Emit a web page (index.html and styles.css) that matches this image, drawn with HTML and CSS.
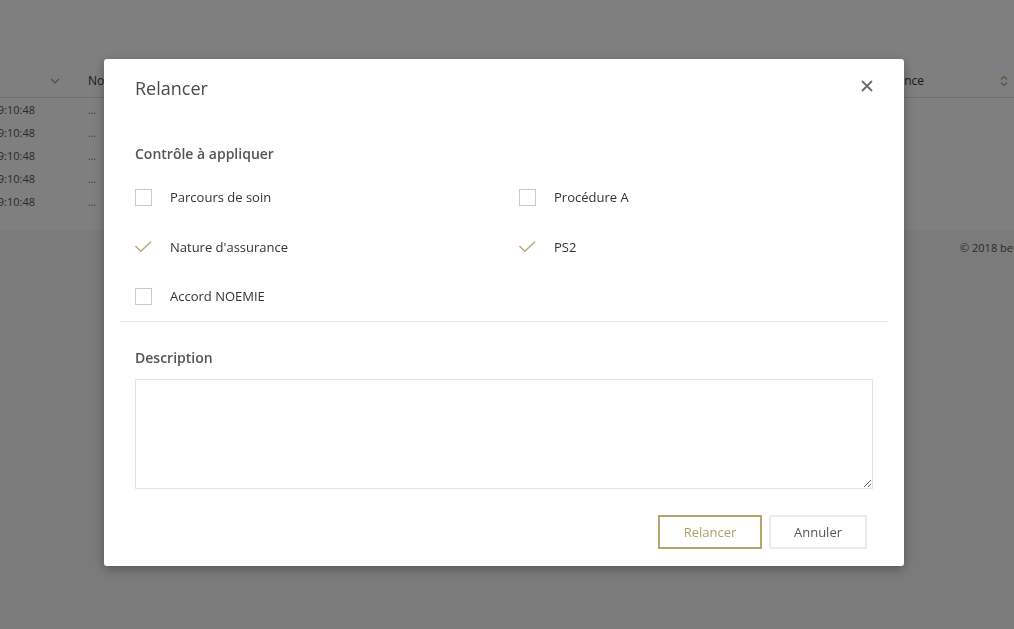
FILE: index.html
```html
<!DOCTYPE html>
<html lang="fr">
<head>
<meta charset="utf-8">
<title>Relancer</title>
<link rel="stylesheet" href="styles.css">
</head>
<body>
<div class="page">
  <div class="table">
    <div class="thead">
      <div class="c-date"><span class="chev"><svg width="10" height="6" viewBox="0 0 10 6"><path d="M1 1 L5 5 L9 1" fill="none" stroke="#999" stroke-width="1.2"/></svg></span></div>
      <div class="c-no">No</div>
      <div class="c-mid"></div>
      <div class="c-last">Nature d'assurance</div>
      <div class="c-sort"><svg width="8" height="12" viewBox="0 0 8 12"><path d="M1 4.5 L4 1.5 L7 4.5 M1 7.5 L4 10.5 L7 7.5" fill="none" stroke="#b8a46a" stroke-width="1.2"/></svg></div>
    </div>
    <div class="trow"><div class="c-date">12/03/2018 09:10:48</div><div class="c-no dots">...</div></div>
    <div class="trow"><div class="c-date">12/03/2018 09:10:48</div><div class="c-no dots">...</div></div>
    <div class="trow"><div class="c-date">12/03/2018 09:10:48</div><div class="c-no dots">...</div></div>
    <div class="trow"><div class="c-date">12/03/2018 09:10:48</div><div class="c-no dots">...</div></div>
    <div class="trow"><div class="c-date">12/03/2018 09:10:48</div><div class="c-no dots">...</div></div>
  </div>
  <div class="footer"><span class="copy">© 2018 beneficiaires</span></div>
</div>

<div class="overlay">
  <div class="modal">
    <div class="m-head">
      <h1 class="m-title">Relancer</h1>
      <button class="m-close" aria-label="Fermer"><svg width="12" height="12" viewBox="0 0 12 12"><path d="M1.5 1.5 L10.5 10.5 M10.5 1.5 L1.5 10.5" stroke="#6b6b6b" stroke-width="1.8" stroke-linecap="round"/></svg></button>
    </div>
    <div class="m-body">
      <div class="section">
        <h2 class="s-title">Contrôle à appliquer</h2>
        <div class="checks">
          <label class="check"><span class="box"></span><span>Parcours de soin</span></label>
          <label class="check"><span class="box"></span><span>Procédure A</span></label>
          <label class="check"><span class="tick"><svg width="18" height="12" viewBox="0 0 18 12"><path d="M0.5 5 L6 10.5 L17 0.5" fill="none" stroke="#b5a770" stroke-width="1.5"/></svg></span><span>Nature d'assurance</span></label>
          <label class="check"><span class="tick"><svg width="18" height="12" viewBox="0 0 18 12"><path d="M0.5 5 L6 10.5 L17 0.5" fill="none" stroke="#b5a770" stroke-width="1.5"/></svg></span><span>PS2</span></label>
          <label class="check"><span class="box"></span><span>Accord NOEMIE</span></label>
        </div>
      </div>
      <hr class="sep">
      <div class="section desc">
        <h2 class="s-title">Description</h2>
        <textarea class="area"></textarea>
      </div>
      <div class="actions">
        <button class="btn btn-primary">Relancer</button>
        <button class="btn btn-default">Annuler</button>
      </div>
    </div>
  </div>
</div>
</body>
</html>
```
FILE: styles.css
```css
* { box-sizing: border-box; }
html, body { margin: 0; padding: 0; }
body {
  width: 1014px;
  height: 629px;
  overflow: hidden;
  background: #f6f6f6;
  font-family: "Open Sans", "Liberation Sans", sans-serif;
  color: #333;
}

.page { height: 629px; }
.table {
  background: #fff;
  padding-top: 64px;
  height: 230px;
  overflow: hidden;
}
.thead, .trow {
  display: flex;
  align-items: center;
  margin-left: -80px;
  font-size: 12px;
}
.thead {
  height: 34px;
  border-bottom: 1px solid #e2e2e2;
  color: #333;
}
.trow { height: 23px; color: #555; font-size: 11px; }
.c-date { width: 115px; display: flex; justify-content: flex-end; }
.trow .c-date { display: block; text-align: right; white-space: nowrap; }
.chev { display: inline-flex; margin-right: -25px; }
.c-no { width: 100px; padding-left: 53px; }
.trow .c-no { font-size: 10px; color: #777; }
.c-mid { flex: 1; }
.c-last { width: 240px; text-align: right; white-space: nowrap; font-size: 12px; }
.c-sort { width: 90px; display: flex; justify-content: flex-end; padding-right: 6px; }

.footer {
  padding: 10px 0 0 960px;
  font-size: 11px;
  color: #555;
  white-space: nowrap;
  overflow: hidden;
}

.overlay {
  position: fixed;
  inset: 0;
  background: rgba(0, 0, 0, 0.5);
  padding-top: 59px;
}
.modal {
  margin-left: 104px;
  width: 800px;
  background: #fff;
  border-radius: 3px;
  box-shadow: 0 3px 12px rgba(0, 0, 0, 0.3);
  padding: 0 16px 17px;
}
.m-head {
  display: flex;
  align-items: center;
  justify-content: space-between;
  padding: 16px 15px;
}
.m-title {
  margin: 0;
  font-size: 18px;
  line-height: 26px;
  font-weight: 400;
  color: #4a4a4a;
}
.m-close {
  border: 0;
  background: none;
  padding: 0;
  margin-top: -4px;
  width: 12px;
  height: 12px;
  display: flex;
  cursor: pointer;
}

.section { padding: 0 15px; }
.s-title {
  margin: 0;
  font-size: 14px;
  line-height: 20px;
  font-weight: 600;
  color: #555;
}
.section:first-child .s-title { margin-top: 27px; }
.checks {
  display: grid;
  grid-template-columns: 384px 1fr;
  grid-auto-rows: 20px;
  row-gap: 29.5px;
  margin-top: 23px;
}
.check {
  display: flex;
  align-items: center;
  font-size: 13px;
  color: #333;
}
.box {
  width: 17px;
  height: 17px;
  border: 1px solid #c9c9c9;
  background: #fff;
  margin-right: 18px;
  flex: none;
}
.tick {
  width: 17px;
  height: 12px;
  margin-right: 18px;
  display: flex;
  flex: none;
}
.sep {
  border: 0;
  border-top: 1px solid #e6e6e6;
  margin: 15px 0 0;
}
.desc .s-title { margin-top: 26px; }
.area {
  display: block;
  width: 100%;
  height: 110px;
  margin-top: 11px;
  border: 1px solid #e4e4e4;
  border-radius: 0;
  resize: both;
  font-family: inherit;
}
.actions {
  display: flex;
  justify-content: flex-end;
  gap: 7px;
  margin-top: 26px;
  padding-right: 21px;
}
.btn {
  height: 34px;
  font-family: "Open Sans", "Liberation Sans", sans-serif;
  font-size: 13px;
  background: #fff;
  border-radius: 0;
  cursor: pointer;
}
.btn-primary {
  width: 104px;
  border: 2px solid #b8a56a;
  color: #b0a06a;
}
.btn-default {
  width: 98px;
  border: 2px solid #ececec;
  color: #555;
}
```
